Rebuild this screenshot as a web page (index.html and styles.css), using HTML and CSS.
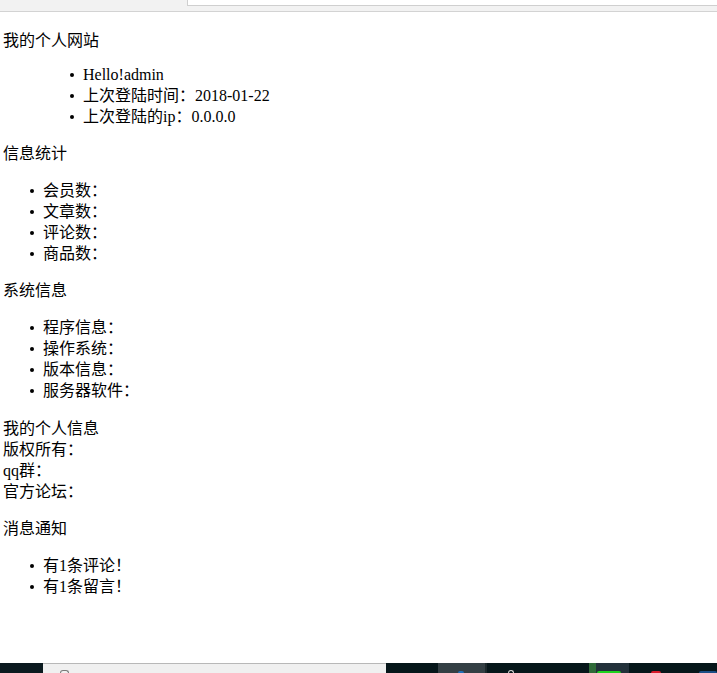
FILE: index.html
```html
<!DOCTYPE html>
<html lang="zh-CN">
<head>
<meta charset="utf-8">
<title>我的个人网站</title>
<link rel="stylesheet" href="styles.css">
</head>
<body>
<div class="page">
  <div class="browser-bar">
    <div class="bar-left"></div>
    <div class="bar-input"></div>
  </div>
  <main class="content">
    <p class="heading first">我的个人网站</p>
    <ul class="user-info">
      <li>Hello!admin</li>
      <li>上次登陆时间：2018-01-22</li>
      <li>上次登陆的ip：0.0.0.0</li>
    </ul>
    <p class="heading">信息统计</p>
    <ul class="list">
      <li>会员数：</li>
      <li>文章数：</li>
      <li>评论数：</li>
      <li>商品数：</li>
    </ul>
    <p class="heading">系统信息</p>
    <ul class="list">
      <li>程序信息：</li>
      <li>操作系统：</li>
      <li>版本信息：</li>
      <li>服务器软件：</li>
    </ul>
    <div class="personal">
      <div>我的个人信息</div>
      <div>版权所有：</div>
      <div>qq群：</div>
      <div>官方论坛：</div>
    </div>
    <p class="heading">消息通知</p>
    <ul class="list notices">
      <li>有1条评论！</li>
      <li>有1条留言！</li>
    </ul>
  </main>
  <div class="taskbar">
    <div class="tb-start"></div>
    <div class="tb-search"><span class="tb-search-icon"></span></div>
    <div class="tb-dark w52"></div>
    <div class="tb-active"><span class="tb-dot blue"></span></div>
    <div class="tb-sep"></div>
    <div class="tb-dark w102"><span class="tb-dot white"></span></div>
    <div class="tb-green"></div>
    <div class="tb-app"><span class="tb-line green"></span></div>
    <div class="tb-dark grow">
      <span class="tb-dot red"></span>
      <span class="tb-dot navy"></span>
    </div>
  </div>
</div>
</body>
</html>
```
FILE: styles.css
```css
html, body {
  margin: 0;
  padding: 0;
  background: #ffffff;
}

body {
  font-family: "Liberation Serif", "Noto Sans CJK SC", serif;
  font-size: 16px;
  line-height: 21px;
  color: #000000;
}

.page {
  display: flex;
  flex-direction: column;
  height: 673px;
  overflow: hidden;
}

.browser-bar {
  display: flex;
  height: 11px;
  background: #f2f2f2;
  border-bottom: 1px solid #d3d3d3;
  flex: none;
}

.bar-left {
  width: 187px;
}

.bar-input {
  flex: 1;
  height: 5px;
  background: #ffffff;
  border-left: 1px solid #cfcfcf;
  border-bottom: 1px solid #cfcfcf;
}

.content {
  flex: 1;
  padding-left: 3px;
  overflow: hidden;
}

.heading {
  margin: 16px 0;
}

.heading.first {
  margin-top: 18px;
  margin-bottom: 13px;
}

ul {
  margin: 16px 0;
  padding: 0;
  list-style: none;
}

li {
  position: relative;
}

li::before {
  content: "";
  position: absolute;
  left: -13px;
  top: 9px;
  width: 4px;
  height: 4px;
  border-radius: 50%;
  background: #000000;
}

.user-info {
  margin: 13px 0 16px;
  padding-left: 80px;
}

.list {
  padding-left: 40px;
}

.personal {
  margin: 17px 0 16px;
}

.notices {
  margin-top: 15px;
}

.taskbar {
  display: flex;
  height: 10px;
  flex: none;
  background: #06161a;
}

.tb-start {
  width: 43px;
  background: #0b1a1f;
}

.tb-search {
  width: 343px;
  background: #f0f0f0;
  border-top: 1px solid #b8b8b8;
  box-sizing: border-box;
  position: relative;
}

.tb-search-icon {
  position: absolute;
  left: 17px;
  bottom: 0;
  width: 7px;
  height: 2px;
  border-radius: 4px 4px 0 0;
  border: 1px solid #7a7a7a;
  border-bottom: none;
}

.tb-dark {
  background: #06161a;
  position: relative;
}

.w52 { width: 52px; }
.w102 { width: 102px; }
.grow { flex: 1; }

.tb-active {
  width: 47px;
  background: #343f44;
  position: relative;
}

.tb-sep {
  width: 2px;
  background: #1c282c;
}

.tb-green {
  width: 7px;
  background: #2f6a38;
}

.tb-app {
  width: 33px;
  background: #22313a;
  position: relative;
}

.tb-dot {
  position: absolute;
  bottom: 0;
  height: 2px;
  border-radius: 3px 3px 0 0;
}

.tb-dot.blue { left: 20px; width: 6px; background: #1f6fb8; }
.tb-dot.white { left: 21px; width: 6px; height: 3px; border: 1px solid #d8d8d8; border-bottom: none; box-sizing: border-box; }
.tb-dot.red { left: 22px; width: 10px; background: #d8192a; }
.tb-dot.navy { left: 70px; width: 18px; background: #1c4f86; }

.tb-line {
  position: absolute;
  bottom: 0;
  left: 1px;
  width: 24px;
  height: 2px;
  background: #1ed31e;
  border-radius: 2px 2px 0 0;
}
```
